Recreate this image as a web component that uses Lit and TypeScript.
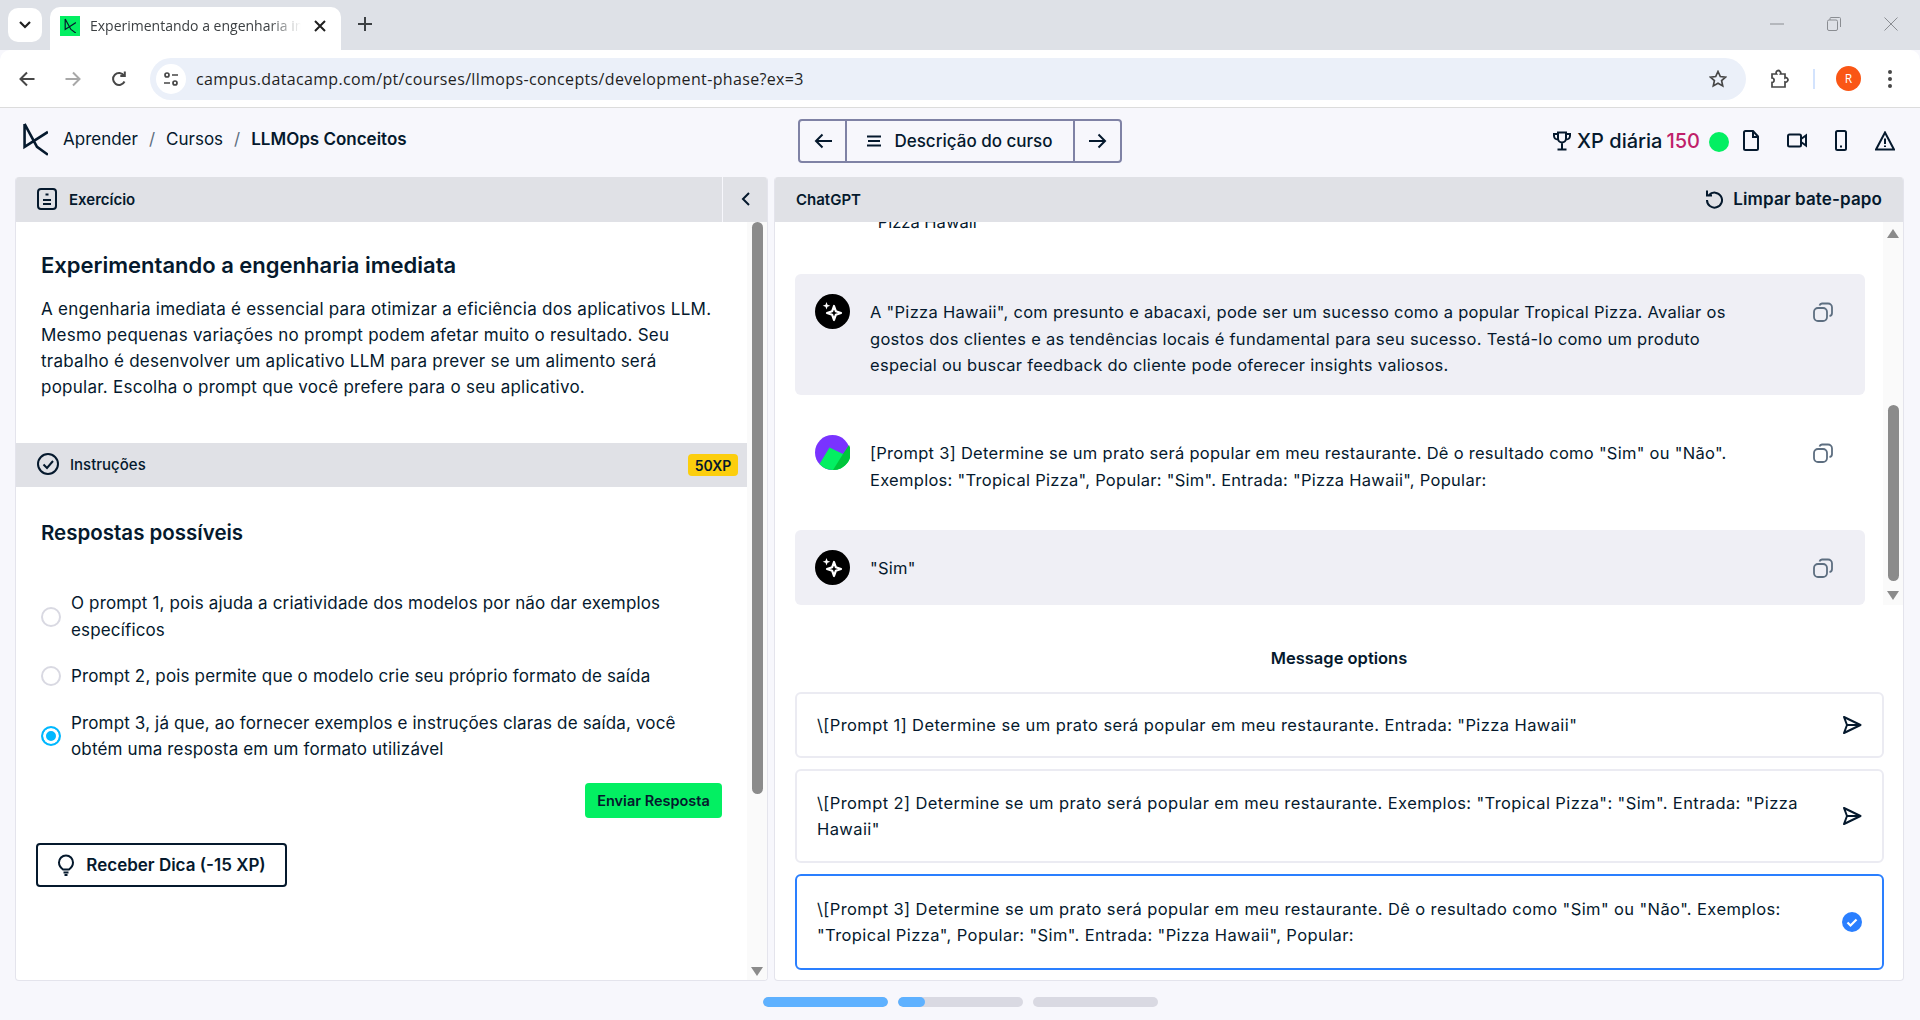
import { LitElement, html, css, svg } from 'lit';
import { customElement } from 'lit/decorators.js';

const logo = (size: number) => html`<svg width="${size}" height="${size * 1.3}" viewBox="0 0 26 34" fill="none" stroke="#05192d" stroke-width="2.6"><path d="M2.500 2V25L26 10M2.500 2L15 25L26 33"/></svg>`;
const sparkle = html`<svg class="avatar" viewBox="0 0 35 35"><circle cx="17.5" cy="17.5" r="17.5" fill="#000"/><path fill="none" stroke="#fff" stroke-width="2.200" stroke-linejoin="round" d="M19 12l1.800 5.200 5.200 1.800-5.200 1.800-1.800 5.200-1.800-5.200-5.200-1.800 5.200-1.800z"/><path fill="#fff" d="M11.500 8l1 2.800 2.800 1-2.800 1-1 2.800-1-2.800-2.800-1 2.800-1z"/></svg>`;
const userAvatar = html`<svg class="avatar" viewBox="0 0 35 35"><circle cx="17.500" cy="17.500" r="17.500" fill="#7933ff"/><path fill="#03ef62" d="M4.500 29L14.500 12.500 28 19 35 12A17.500 17.500 0 0 1 17.500 35 17.500 17.500 0 0 1 4.500 29z"/><path fill="#00c53b" d="M18 35L28 19 34 10A17.500 17.500 0 0 1 18 35z"/></svg>`;
const copyIcon = html`<svg class="copy" viewBox="0 0 20 20" fill="none" stroke="#5d6e80" stroke-width="1.800"><rect x="1" y="6" width="13" height="13" rx="4"/><path d="M6.500 3.500A3 3 0 0 1 9 1.500h6a4 4 0 0 1 4 4v5.500a3 3 0 0 1-2.500 3"/></svg>`;
const sendIcon = html`<svg class="end-icon" width="20" height="20" viewBox="0 0 20 20" fill="none" stroke="#05192d" stroke-width="2" stroke-linejoin="round"><path d="M2 2L18.500 10 2 18 5 10zM5 10H18"/></svg>`;
const checkIcon = html`<svg class="end-icon" width="20" height="20" viewBox="0 0 20 20"><circle cx="10" cy="10" r="10" fill="#2a7fff"/><path d="M5.500 10.500L8.500 13.500 14.500 7.500" fill="none" stroke="#fff" stroke-width="2.200"/></svg>`;

const stroke = (w: number, h: number, body: unknown, color = '#05192d', sw = 2) =>
  html`<svg width="${w}" height="${h}" viewBox="0 0 ${w} ${h}" fill="none" stroke="${color}" stroke-width="${sw}">${body}</svg>`;

const answers = [
  { text: 'O prompt 1, pois ajuda a criatividade dos modelos por não dar exemplos específicos', on: false },
  { text: 'Prompt 2, pois permite que o modelo crie seu próprio formato de saída', on: false },
  { text: 'Prompt 3, já que, ao fornecer exemplos e instruções claras de saída, você obtém uma resposta em um formato utilizável', on: true },
];

const options = [
  { text: '\\[Prompt 1] Determine se um prato será popular em meu restaurante. Entrada: "Pizza Hawaii"', on: false },
  { text: '\\[Prompt 2] Determine se um prato será popular em meu restaurante. Exemplos: "Tropical Pizza": "Sim". Entrada: "Pizza Hawaii"', on: false },
  { text: '\\[Prompt 3] Determine se um prato será popular em meu restaurante. Dê o resultado como "Sim" ou "Não". Exemplos: "Tropical Pizza", Popular: "Sim". Entrada: "Pizza Hawaii", Popular:', on: true },
];

const progress = [100, 22, 0];

@customElement('app-root')
export class AppRoot extends LitElement {
  static styles = css`
    :host {
      display: block;
      width: 1920px;
      height: 1020px;
      overflow: hidden;
      background: #f7f7fc;
      color: #05192d;
      font-family: Inter, 'Noto Sans', sans-serif;
      font-size: 17px;
    }
    svg { display: block; flex: none; }

    /* browser chrome */
    .tabs {
      height: 50px;
      background: #dee1e7;
      display: flex;
      align-items: flex-end;
      box-sizing: border-box;
      padding-left: 8px;
    }
    .tab-search {
      width: 34px;
      height: 34px;
      border-radius: 10px;
      background: #fff;
      align-self: flex-start;
      margin-top: 8px;
      display: flex;
      align-items: center;
      justify-content: center;
    }
    .tab {
      width: 291px;
      height: 43px;
      margin-left: 8px;
      background: #fff;
      border-radius: 10px 10px 0 0;
      display: flex;
      align-items: center;
      box-sizing: border-box;
      padding: 0 15px 6px 10px;
      font: 14px 'Open Sans', sans-serif;
      color: #3c4043;
    }
    .favicon {
      width: 20px;
      height: 20px;
      background: #03ef62;
      display: flex;
      align-items: center;
      justify-content: center;
      flex: none;
    }
    .tab-title {
      margin: 0 13px 0 10px;
      flex: 1;
      white-space: nowrap;
      overflow: hidden;
      -webkit-mask-image: linear-gradient(90deg, #000 85%, transparent);
      mask-image: linear-gradient(90deg, #000 85%, transparent);
    }
    .new-tab { align-self: flex-start; margin: 17px 0 0 17px; }
    .window-btns {
      margin-left: auto;
      align-self: flex-start;
      display: flex;
      align-items: center;
      gap: 43px;
      padding: 17px 22px 0 0;
    }
    .toolbar {
      height: 57px;
      background: #fff;
      border-bottom: 1px solid #dcdcdc;
      border-radius: 10px 10px 0 0;
      display: flex;
      align-items: center;
      padding: 0 19px;
    }
    .nav-icons { display: flex; gap: 30px; align-items: center; margin-right: 23px; }
    .omnibox {
      width: 1596px;
      height: 42px;
      background: #ebf0f9;
      border-radius: 21px;
      display: flex;
      align-items: center;
      padding: 0 19px 0 6px;
      box-sizing: border-box;
      font: 16px 'Open Sans', sans-serif;
      letter-spacing: 0.35px;
      color: #1f1f1f;
    }
    .site-btn {
      width: 30px;
      height: 30px;
      border-radius: 50%;
      background: #fff;
      display: flex;
      align-items: center;
      justify-content: center;
      margin-right: 10px;
    }
    .url { flex: 1; }
    .toolbar-end { display: flex; align-items: center; margin-left: 24px; }
    .sep { width: 2px; height: 20px; background: #d3e3fd; margin: 0 21px 0 23px; }
    .profile {
      width: 25px;
      height: 25px;
      border-radius: 50%;
      background: #fa5615;
      color: #fff;
      font: 12px 'Open Sans', sans-serif;
      display: flex;
      align-items: center;
      justify-content: center;
      margin-right: 27px;
    }

    /* course header */
    .header {
      height: 69px;
      display: grid;
      grid-template-columns: 1fr auto 1fr;
      align-items: center;
      padding: 0 25px 0 22px;
    }
    .crumbs { display: flex; align-items: center; margin-bottom: 7px; }
    .crumbs .home { margin-right: 15px; }
    .crumbs .slash { color: #5d6e80; margin: 0 11px; }
    .crumbs b { font-weight: 600; }
    .pager {
      display: flex;
      height: 44px;
      width: 324px;
      box-sizing: border-box;
      border: 2px solid #7f82a5;
      border-radius: 4px;
      margin: 0 0 4px 3px;
    }
    .pager-arrow {
      width: 45px;
      flex: none;
      display: flex;
      align-items: center;
      justify-content: center;
    }
    .pager-mid {
      flex: 1;
      border-left: 2px solid #7f82a5;
      border-right: 2px solid #7f82a5;
      display: flex;
      align-items: center;
      justify-content: center;
      gap: 13px;
      font-weight: 500;
    }
    .stats { display: flex; align-items: center; justify-content: flex-end; font-size: 20px; font-weight: 500; margin-bottom: 4px; }
    .stats .xp { margin: 0 4px 0 6px; }
    .stats .num { color: #c01f6a; }
    .dot { width: 20px; height: 20px; border-radius: 50%; background: #03ef62; margin: 2px 14px 0 9px; }
    .stat-icons { display: flex; align-items: center; gap: 28px; }

    /* panels */
    .panels {
      display: flex;
      gap: 6px;
      padding: 0 16px 0 15px;
      height: 804px;
    }
    .panel {
      background: #fff;
      border: 1px solid #e4e4ec;
      border-top: 0;
      border-radius: 4px;
      box-sizing: border-box;
      display: flex;
      flex-direction: column;
      overflow: hidden;
    }
    .left { width: 753px; }
    .right { width: 1130px; }
    .panel-head {
      height: 45px;
      flex: none;
      box-sizing: border-box;
      padding-bottom: 1px;
      background: #e0e1e6;
      display: flex;
      align-items: center;
      font-size: 15px;
      font-weight: 600;
    }
    .left .panel-head { padding-left: 21px; gap: 12px; }
    .collapse {
      margin-left: auto;
      width: 44px;
      height: 45px;
      border-left: 1px solid #f7f7fc;
      display: flex;
      align-items: center;
      justify-content: center;
    }
    .right .panel-head { justify-content: space-between; padding: 0 21px 1px; }
    .clear { display: flex; align-items: center; gap: 10px; font-size: 17px; letter-spacing: 0.12px; }
    .left-body { flex: 1; display: flex; min-height: 0; }
    .left-main { flex: 1; min-width: 0; display: flex; flex-direction: column; }
    .scroll {
      width: 20px;
      flex: none;
      background: #fafafa;
      display: flex;
      flex-direction: column;
      align-items: center;
    }
    .thumb { width: 11px; background: #8b8b8b; border-radius: 6px; }
    .tri { width: 0; height: 0; border-left: 6.500px solid transparent; border-right: 6.500px solid transparent; }
    .tri.up { border-bottom: 9px solid #8b8b8b; margin: 7px 0 0; }
    .tri.down { border-top: 9px solid #8b8b8b; }

    .lesson { padding: 30px 25px 0; }
    h1 { font-size: 22px; line-height: 26px; font-weight: 600; margin: 0 0 18px; }
    .lesson p { margin: 0; font-size: 17px; letter-spacing: 0.25px; line-height: 26px; }
    .strip {
      height: 44px;
      flex: none;
      margin-top: 43px;
      background: #e0e1e6;
      display: flex;
      align-items: center;
      padding: 0 9px 2px 21px;
      box-sizing: border-box;
      font-size: 15px;
      font-weight: 500;
      gap: 11px;
    }
    .badge {
      margin: 2px 0 0 auto;
      background: #fcce0d;
      border-radius: 4px;
      width: 50px;
      height: 22px;
      display: flex;
      align-items: center;
      justify-content: center;
      font-size: 14px;
      font-weight: 600;
    }
    .answers { padding: 33px 25px 0; }
    h2 { font-size: 20.500px; line-height: 26px; font-weight: 600; margin: 0 0 44px; }
    .answer { display: flex; align-items: center; gap: 10px; margin-bottom: 20px; letter-spacing: 0.15px; line-height: 26.500px; }
    .radio {
      width: 20px;
      height: 20px;
      flex: none;
      box-sizing: border-box;
      border-radius: 50%;
      border: 2px solid #d9d9e2;
    }
    .radio.on { border: 2px solid #00b8ff; background: #00b8ff; box-shadow: inset 0 0 0 3px #fff; }
    .submit-row { display: flex; justify-content: flex-end; }
    .submit {
      width: 137px;
      height: 35px;
      background: #03ef62;
      border-radius: 4px;
      display: flex;
      align-items: center;
      justify-content: center;
      font-size: 14.500px;
      font-weight: 600;
    }
    .hint {
      width: 251px;
      height: 44px;
      margin: 25px 0 0 -5px;
      box-sizing: border-box;
      border: 2px solid #05192d;
      border-radius: 4px;
      display: flex;
      align-items: center;
      justify-content: center;
      gap: 11px;
      font-weight: 600;
    }

    /* chat */
    .chat { height: 383px; flex: none; display: flex; }
    .chat-main { flex: 1; min-width: 0; overflow: hidden; padding: 0 18px 0 20px; }
    .cut { margin: -13px 0 0 75px; line-height: 26px; height: 65px; font-size: 16.500px; }
    .msg {
      display: flex;
      align-items: flex-start;
      border-radius: 6px;
      padding: 20px 32px 0 20px;
      box-sizing: border-box;
      font-size: 16.500px;
      letter-spacing: 0.28px;
      line-height: 26.500px;
    }
    .msg.bot { background: #efeff5; }
    .msg .avatar { width: 35px; height: 35px; flex: none; margin-right: 20px; }
    .msg .txt { flex: 1; margin-top: 5px; }
    .msg .copy { width: 20px; height: 20px; flex: none; margin: 8px 0 0 46px; }
    .m1 { height: 121px; }
    .m2 { height: 115px; margin-top: 20px; }
    .m3 { height: 75px; }
    .opts-title { text-align: center; font-weight: 600; font-size: 16.500px; line-height: 20px; margin-top: 43px; }
    .opts { padding: 24px 19px 0 20px; display: flex; flex-direction: column; gap: 11px; }
    .opt {
      min-height: 66px;
      box-sizing: border-box;
      border: 2px solid #ebebf2;
      border-radius: 6px;
      padding: 7px 20px;
      display: flex;
      align-items: center;
      justify-content: space-between;
      gap: 30px;
      font-size: 16.500px;
      letter-spacing: 0.4px;
      line-height: 26px;
    }
    .opt.multi { min-height: 94px; }
    .opt.on { min-height: 96px; border-color: #2a7fff; }

    .progress { display: flex; justify-content: center; gap: 10px; padding-top: 16px; }
    .bar { width: 125px; height: 10px; border-radius: 5px; background: #d9d9e2; overflow: hidden; }
    .fill { height: 100%; background: #5eb1ff; border-radius: 5px; }
  `;

  private renderChrome() {
    return html`
      <div class="tabs">
        <div class="tab-search">
          ${stroke(14, 10, svg`<path d="M2 2l5 5 5-5"/>`, '#1f1f1f', 2.2)}
        </div>
        <div class="tab">
          <div class="favicon">${logo(12)}</div>
          <span class="tab-title">Experimentando a engenharia imediata</span>
          ${stroke(12, 12, svg`<path d="M1 1l10 10M11 1L1 11"/>`, '#1f1f1f', 2)}
        </div>
        <div class="new-tab">${stroke(14, 14, svg`<path d="M7 0v14M0 7h14"/>`, '#3c4043', 2)}</div>
        <div class="window-btns">
          ${stroke(14, 14, svg`<path d="M0 7h14"/>`, '#8a8d92', 1)}
          ${stroke(14, 14, svg`<rect x=".5" y="3" width="10" height="10.500" rx="1.500"/><path d="M3 3V1.500A1 1 0 0 1 4 .5h8.500a1 1 0 0 1 1 1V10"/>`, '#8a8d92', 1)}
          ${stroke(14, 14, svg`<path d="M.5.5l13 13M13.500.5l-13 13"/>`, '#8a8d92', 1)}
        </div>
      </div>
      <div class="toolbar">
        <div class="nav-icons">
          ${stroke(16, 16, svg`<path d="M15.500 8H2M8 1.500L1.500 8 8 14.500"/>`, '#474747', 2)}
          ${stroke(16, 16, svg`<path d="M.5 8H14M8 1.500L14.500 8 8 14.500"/>`, '#a8a8a8', 2)}
          ${stroke(16, 16, svg`<path d="M13.500 10.500A6 6 0 1 1 13 4.500M13.800 .5v4.500H9.300"/>`, '#474747', 2)}
        </div>
        <div class="omnibox">
          <div class="site-btn">
            ${stroke(16, 16, svg`<circle cx="4" cy="4" r="2"/><path d="M9 4h6M1 12h6"/><circle cx="12" cy="12" r="2"/>`, '#474747', 1.700)}
          </div>
          <span class="url">campus.datacamp.com/pt/courses/llmops-concepts/development-phase?ex=3</span>
          ${stroke(18, 18, svg`<path d="M9 1.500l2.300 5 5.200.6-3.900 3.500 1.100 5.300L9 13.200l-4.700 2.700 1.100-5.300L1.500 7.100l5.200-.6z"/>`, '#474747', 1.700)}
        </div>
        <div class="toolbar-end">
          ${stroke(20, 20, svg`<path d="M2 5h4.500a2 2 0 0 1 3.500-2.500 2 2 0 0 1 .5 2.500H15v4a2 2 0 0 1 2.500 3 2 2 0 0 1-2.500 1v5H2v-4.500a2 2 0 0 0 2-2.500 2 2 0 0 0-2-2z"/>`, '#474747', 1.700)}
          <div class="sep"></div>
          <div class="profile">R</div>
          ${stroke(4, 18, svg`<circle cx="2" cy="2" r="2" fill="#474747" stroke="none"/><circle cx="2" cy="9" r="2" fill="#474747" stroke="none"/><circle cx="2" cy="16" r="2" fill="#474747" stroke="none"/>`)}
        </div>
      </div>
    `;
  }

  private renderHeader() {
    return html`
      <div class="header">
        <div class="crumbs">
          <span class="home">${logo(26)}</span>
          <span>Aprender</span><span class="slash">/</span>
          <span>Cursos</span><span class="slash">/</span>
          <b>LLMOps Conceitos</b>
        </div>
        <div class="pager">
          <div class="pager-arrow">${stroke(18, 16, svg`<path d="M18 8H2M8.500 1.500L2 8l6.500 6.500"/>`)}</div>
          <div class="pager-mid">
            ${stroke(14, 12, svg`<path d="M0 1.500h14M1 6h12M0 10.500h14"/>`)}
            <span>Descrição do curso</span>
          </div>
          <div class="pager-arrow">${stroke(18, 16, svg`<path d="M0 8h16M9.500 1.500L16 8l-6.500 6.500"/>`)}</div>
        </div>
        <div class="stats">
          ${stroke(18, 20, svg`<path d="M5 1.500h8v6a4 4 0 0 1-8 0zM5 3H1v2a4 4 0 0 0 4 3.500M13 3h4v2a4 4 0 0 1-4 3.500M9 11.500V18M4.500 18.500h9"/>`)}
          <span class="xp">XP diária</span><span class="num">150</span>
          <span class="dot"></span>
          <div class="stat-icons">
            ${stroke(16, 21, svg`<path d="M1 2.500a1.500 1.500 0 0 1 1.500-1.500H10l5 5.500v12a1.500 1.500 0 0 1-1.500 1.500h-11A1.500 1.500 0 0 1 1 18.500zM10 1v6h5"/>`)}
            ${stroke(20, 15, svg`<rect x="1" y="1.500" width="13" height="12" rx="1.500"/><path d="M14 6l5-3.500v10L14 9"/>`)}
            ${stroke(12, 21, svg`<rect x="1" y="1" width="10" height="19" rx="1.500"/><path d="M5 16.500h2"/>`)}
            ${stroke(20, 20, svg`<path d="M10 1.500L1 18.500h18zM10 7.500v5.500M10 14.500v1.500"/>`)}
          </div>
        </div>
      </div>
    `;
  }

  private renderLeft() {
    return html`
      <section class="panel left">
        <div class="panel-head">
          ${stroke(20, 22, svg`<rect x="1" y="1" width="18" height="20" rx="3"/><path d="M8.500 6.500h3M6 12h8M6 16h8"/>`)}
          <span>Exercício</span>
          <div class="collapse">${stroke(9, 14, svg`<path d="M8 1L2 7l6 6"/>`)}</div>
        </div>
        <div class="left-body">
          <div class="left-main">
            <div class="lesson">
              <h1>Experimentando a engenharia imediata</h1>
              <p>A engenharia imediata é essencial para otimizar a eficiência dos aplicativos LLM. Mesmo pequenas variações no prompt podem afetar muito o resultado. Seu trabalho é desenvolver um aplicativo LLM para prever se um alimento será popular. Escolha o prompt que você prefere para o seu aplicativo.</p>
            </div>
            <div class="strip">
              ${stroke(22, 22, svg`<circle cx="11" cy="11" r="10"/><path d="M6.500 11.500l3.500 3.500 6-7"/>`)}
              <span>Instruções</span>
              <span class="badge">50XP</span>
            </div>
            <div class="answers">
              <h2>Respostas possíveis</h2>
              ${answers.map(
                a => html`<div class="answer"><span class="radio ${a.on ? 'on' : ''}"></span><span>${a.text}</span></div>`,
              )}
              <div class="submit-row"><div class="submit">Enviar Resposta</div></div>
              <div class="hint">
                ${stroke(18, 22, svg`<path d="M6 15.500C4 14 2 12 2 8.500a7 7 0 0 1 14 0c0 3.500-2 5.500-4 7zM6.500 18.500h5M7.500 21h3"/>`)}
                <span>Receber Dica (-15 XP)</span>
              </div>
            </div>
          </div>
          <div class="scroll">
            <div class="thumb" style="height: 572px"></div>
            <div class="tri down" style="margin-top: 173px"></div>
          </div>
        </div>
      </section>
    `;
  }

  private renderRight() {
    return html`
      <section class="panel right">
        <div class="panel-head">
          <span>ChatGPT</span>
          <span class="clear">
            ${stroke(18, 20, svg`<path d="M4 6a7.500 7.500 0 1 1-2 5M2 1.500V6.500h5"/>`)}
            Limpar bate-papo
          </span>
        </div>
        <div class="chat">
          <div class="chat-main">
            <div class="cut">"Pizza Hawaii"</div>
            <div class="msg bot m1">
              ${sparkle}
              <span class="txt">A "Pizza Hawaii", com presunto e abacaxi, pode ser um sucesso como a popular Tropical Pizza. Avaliar os gostos dos clientes e as tendências locais é fundamental para seu sucesso. Testá-lo como um produto especial ou buscar feedback do cliente pode oferecer insights valiosos.</span>
              ${copyIcon}
            </div>
            <div class="msg m2">
              ${userAvatar}
              <span class="txt">[Prompt 3] Determine se um prato será popular em meu restaurante. Dê o resultado como "Sim" ou "Não". Exemplos: "Tropical Pizza", Popular: "Sim". Entrada: "Pizza Hawaii", Popular:</span>
              ${copyIcon}
            </div>
            <div class="msg bot m3">
              ${sparkle}
              <span class="txt">"Sim"</span>
              ${copyIcon}
            </div>
          </div>
          <div class="scroll">
            <div class="tri up"></div>
            <div class="thumb" style="height: 176px; margin-top: 167px"></div>
            <div class="tri down" style="margin-top: 10px"></div>
          </div>
        </div>
        <div class="opts-title">Message options</div>
        <div class="opts">
          ${options.map(
            (o, i) => html`
              <div class="opt ${i === 1 ? 'multi' : ''} ${o.on ? 'on' : ''}">
                <span>${o.text}</span>
                ${o.on ? checkIcon : sendIcon}
              </div>
            `,
          )}
        </div>
      </section>
    `;
  }

  render() {
    return html`
      ${this.renderChrome()}
      ${this.renderHeader()}
      <div class="panels">
        ${this.renderLeft()}
        ${this.renderRight()}
      </div>
      <div class="progress">
        ${progress.map(p => html`<div class="bar"><div class="fill" style="width: ${p}%"></div></div>`)}
      </div>
    `;
  }
}
